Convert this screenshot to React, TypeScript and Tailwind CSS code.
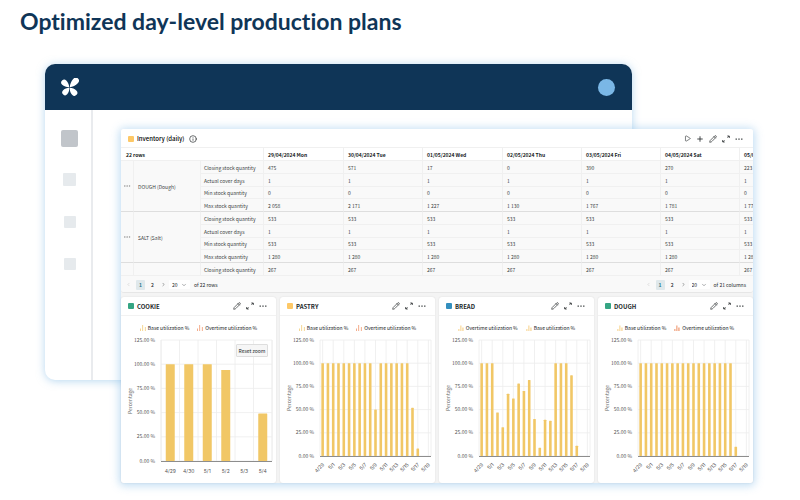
import React from "react";
import { Play, Plus, Pencil, Ellipsis, Info, ChevronLeft, ChevronRight, ChevronDown } from "lucide-react";

const DATES = ["29/04/2024 Mon", "30/04/2024 Tue", "01/05/2024 Wed", "02/05/2024 Thu", "03/05/2024 Fri", "04/05/2024 Sat", "05/05/2024 Sun"];

const METRICS = ["Closing stock quantity", "Actual cover days", "Min stock quantity", "Max stock quantity"];

const same = (value: string) => DATES.map(() => value);

const GROUPS = [
  {
    name: "DOUGH (Dough)",
    rows: [
      ["475", "571", "17", "0", "390", "270", "223"],
      same("1"),
      same("0"),
      ["2 058", "2 171", "1 227", "1 130", "1 767", "1 781", "1 778"],
    ],
  },
  { name: "SALT (Salt)", rows: [same("533"), same("1"), same("533"), same("1 280")] },
  { name: "", rows: [same("267")] },
];

type Series = { label: string; color: string; faded?: boolean };

type ChartData = {
  title: string;
  swatch: string;
  legend: Series[];
  values: number[];
  labels: string[];
  daily?: boolean;
};

const DAYS = ["4/29", "4/30", ...Array.from({ length: 19 }, (_, i) => `5/${i + 1}`)];
const full = (n: number) => Array.from({ length: n }, () => 100);
const BASE = { label: "Base utilization %", color: "#f0c566" };
const OVERTIME = { label: "Overtime utilization %", color: "#ee8a5c" };

const CHARTS: ChartData[] = [
  {
    title: "COOKIE",
    swatch: "bg-[#35a583]",
    legend: [BASE, OVERTIME],
    values: [100, 100, 100, 94, 0, 49],
    labels: ["4/29", "4/30", "5/1", "5/2", "5/3", "5/4"],
    daily: true,
  },
  {
    title: "PASTRY",
    swatch: "bg-[#fdc867]",
    legend: [BASE, OVERTIME],
    values: [...full(10), 50, ...full(6), 52, 8, 0, 0],
    labels: DAYS,
  },
  {
    title: "BREAD",
    swatch: "bg-[#338fbe]",
    legend: [{ ...OVERTIME, color: "#f8cf83", faded: true }, { ...BASE, color: "#f8cf83", faded: true }],
    values: [100, 100, 100, 47, 31, 67, 62, 78, 70, 82, 40, 9, 39, 38, 100, 100, 100, 87, 11, 0, 0],
    labels: DAYS,
  },
  {
    title: "DOUGH",
    swatch: "bg-[#35a583]",
    legend: [{ ...BASE, color: "#f8cf83", faded: true }, { ...OVERTIME, faded: true }],
    values: [...full(18), 10, 0, 0],
    labels: DAYS,
  },
];

function Logo() {
  const petal = "M0-.4C-1.700-2-3-4.800-3-7.200A3 3 0 0 1 3-7.200C3-4.800 1.700-2 0-.4Z";
  return (
    <svg viewBox="0 0 18 18" className="h-[18px] w-[18px]" fill="#fff" aria-hidden="true">
      <g transform="translate(8.500 9.500)">
        <path d={petal} transform="rotate(-47)" />
        <path d={petal} transform="rotate(43) scale(1.050 1.220)" />
        <path d={petal} transform="rotate(138)" />
        <path d={petal} transform="rotate(222) scale(0.950 0.920)" />
      </g>
    </svg>
  );
}

function IconButton({ label, children }: { label: string; children: React.ReactNode }) {
  return (
    <button type="button" aria-label={label} className="flex h-2 w-2 items-center justify-center">
      {children}
    </button>
  );
}

function CommonActions() {
  return (
    <>
      <IconButton label="Edit"><Pencil size={8} strokeWidth={2} /></IconButton>
      <IconButton label="Expand">
        <svg viewBox="0 0 8 8" className="h-2 w-2" fill="none" stroke="currentColor" strokeWidth="0.8">
          <path d="M5.300 1h2v2M7.200 1 5.500 2.700M2.700 7H.7V5M.8 7l1.700-1.700" />
        </svg>
      </IconButton>
      <IconButton label="More">
        <svg viewBox="0 0 8 8" className="h-2 w-2" fill="currentColor">
          <path d="M.6 3.500h1.200v1.200H.6zM3.400 3.500h1.200v1.200H3.400zM6.200 3.500h1.200v1.200H6.200z" />
        </svg>
      </IconButton>
    </>
  );
}

function Pager({ unit, total, name }: { unit: string; total: number; name: string }) {
  return (
    <nav aria-label={`${name} pages`} className="flex items-center">
      <button type="button" aria-label={`Previous ${name}`} className="flex w-[11px] justify-center text-[#bbb]">
        <ChevronLeft size={5} />
      </button>
      <button type="button" aria-current="page" className="mx-[2px] h-[10px] w-[9px] rounded-[1px] bg-[#dfe8eb] text-center font-bold text-[#27778a]">1</button>
      <button type="button" className="w-[11px] text-center font-medium">2</button>
      <button type="button" aria-label={`Next ${name}`} className="flex w-[11px] justify-center">
        <ChevronRight size={5} />
      </button>
      <span className="relative flex items-center">
        <select aria-label={`${name} per page`} defaultValue="20" className="h-[9px] w-[21px] appearance-none rounded-[1px] bg-white pl-[3px] leading-[9px]">
          <option value="20">20</option>
        </select>
        <ChevronDown size={6} strokeWidth={1.500} className="pointer-events-none absolute right-[3px]" />
      </span>
      <span className="ml-1">of {total} {unit}</span>
    </nav>
  );
}

function InventoryTable() {
  return (
    <table className="w-full table-fixed border-separate border-spacing-0 text-left text-[5px] leading-[11px] text-[#3a3f42]">
      <colgroup>
        <col className="w-[12px]" />
        <col className="w-[67px]" />
        <col className="w-[63px]" />
        <col className="w-[80px]" />
        <col className="w-[79px]" />
        <col className="w-[80px]" />
        <col className="w-[79px]" />
        <col className="w-[79px]" />
        <col className="w-[79px]" />
        <col />
      </colgroup>
      <thead className="bg-white">
        <tr className="h-[13px] text-[#15191b]">
          <th colSpan={3} scope="col" className="border-b border-[#f0f0f0] pl-[5px] font-bold">22 rows</th>
          {DATES.map((d) => (
            <th key={d} scope="col" className="overflow-hidden border-b border-l border-[#f0f0f0] pl-1 font-bold whitespace-nowrap">{d}</th>
          ))}
        </tr>
      </thead>
      <tbody>
        {GROUPS.map((g, gi) =>
          g.rows.map((row, ri) => {
            const line = ri === 3 ? "border-b-[#dedede]" : "border-b-[#f0f0f0]";
            const groupLine = g.rows.length === 4 ? "border-b-[#dedede]" : "border-b-[#f0f0f0]";
            return (
              <tr key={`${gi}-${ri}`} className={ri === 2 ? "h-[12px]" : "h-[13px]"}>
                {ri === 0 && (
                  <>
                    <td rowSpan={g.rows.length} className={`border-b p-0 align-middle ${groupLine}`}>
                      {g.name && (
                        <button type="button" aria-label={`${g.name} actions`} className="flex w-full justify-center text-[#999]">
                          <Ellipsis size={8} />
                        </button>
                      )}
                    </td>
                    <th scope="rowgroup" rowSpan={g.rows.length} className={`border-b border-l border-l-[#f0f0f0] p-0 pl-1 align-middle font-normal ${groupLine}`}>{g.name}</th>
                  </>
                )}
                <th scope="row" className={`border-b border-l border-l-[#f0f0f0] p-0 pl-[3px] font-normal whitespace-nowrap ${line}`}>{METRICS[ri]}</th>
                {row.map((v, ci) => (
                  <td key={ci} className={`overflow-hidden border-b border-l border-l-[#f0f0f0] p-0 pl-1 whitespace-nowrap ${line}`}>{v}</td>
                ))}
              </tr>
            );
          })
        )}
      </tbody>
    </table>
  );
}

function LegendItem({ label, color, faded }: Series) {
  return (
    <span className="flex items-center gap-[2px] whitespace-nowrap">
      <svg viewBox="0 0 6 6" className="h-[6px] w-[6px]" fill={color} opacity={faded ? 0.6 : 1} aria-hidden="true">
        {faded ? (
          <path d="M0 4h1.600v2H0zM2 .5h1.600V6H2zM4 2.500h1.800V6H4z" />
        ) : (
          <path d="M.2 3.500h.7V6H.2zM2.400 0h.7v6h-.7zM4.900 2h.7v4h-.7z" />
        )}
      </svg>
      {label}
    </span>
  );
}

function BarChart({ values, labels, daily, title }: ChartData) {
  const left = 40;
  const right = 151;
  const top = 4;
  const bottom = daily ? 125 : 120;
  const step = (right - left) / values.length;
  const y = (v: number) => bottom - (v / 125) * (bottom - top);
  const barWidth = daily ? 9 : 2.600;
  const ticks = [0, 25, 50, 75, 100, 125];
  return (
    <svg viewBox="0 0 155 147" className="block w-full" role="img" aria-label={`${title} utilization by day`}>
      <g stroke="#ececec" strokeWidth="0.8">
        {ticks.map((t) => <line key={t} x1={left} x2={right} y1={y(t)} y2={y(t)} />)}
        {daily
          ? Array.from({ length: 7 }, (_, i) => <line key={i} x1={left + i * step} x2={left + i * step} y1={top} y2={bottom} />)
          : labels.map((l, i) => i % 2 === 0 && <line key={l} x1={left + (i + 0.5) * step} x2={left + (i + 0.5) * step} y1={top} y2={bottom} />)}
        <line x1={left} x2={left} y1={top} y2={bottom} />
        <line x1={right} x2={right} y1={top} y2={bottom} />
      </g>
      <g fill="#f1c766">
        {values.map((v, i) => (
          <rect key={i} x={left + (i + 0.5) * step - barWidth / 2} y={y(v)} width={barWidth} height={bottom - y(v)} rx="0.4" />
        ))}
      </g>
      <line x1={left} x2={right} y1={bottom + 0.500} y2={bottom + 0.500} stroke="#8d8d8d" strokeWidth="1" />
      <g fontSize="5" fill="#555" textAnchor="end">
        {ticks.map((t) => <text key={t} x="34" y={y(t) + 1.500}>{t.toFixed(2)} %</text>)}
      </g>
      <text transform={`translate(11 ${daily ? 65 : 62}) rotate(-90)`} textAnchor="middle" fontSize="5" fill="#666">Percentage</text>
      <g className="font-[Inter,sans-serif]" fontSize="5" fill="#555">
        {labels.map((l, i) => {
          const x = left + (i + 0.5) * step;
          if (daily) return <text key={l} x={x} y="137" textAnchor="middle">{l}</text>;
          if (i % 2) return null;
          return <text key={l} transform={`translate(${x + 2} 129) rotate(-45)`} textAnchor="end">{l}</text>;
        })}
      </g>
    </svg>
  );
}

function ChartCard(chart: ChartData) {
  return (
    <section className="min-w-0 rounded-[3px] bg-white shadow-[0_0_2px_rgba(0,0,0,0.1)]">
      <header className="flex h-[19px] items-center border-b border-[#f2f2f2] pr-[9px] pl-[7px]">
        <span className={`h-[6px] w-[6px] rounded-[1px] ${chart.swatch}`} />
        <h2 className="ml-[3px] flex-1 text-[6px] font-bold">{chart.title}</h2>
        <div className="flex gap-[5px]"><CommonActions /></div>
      </header>
      <div className="mt-2 flex h-2 items-center justify-center gap-2 text-[5px] text-[#15191b]">
        {chart.legend.map((s) => <LegendItem key={s.label} {...s} />)}
      </div>
      <div className="relative mt-1">
        <BarChart {...chart} />
        {chart.daily && (
          <button type="button" className="absolute top-2 right-2 h-[13px] w-8 rounded-[1px] border border-[#dedede] bg-[#f6f6f6] text-[5px] leading-[11px]">
            Reset zoom
          </button>
        )}
      </div>
    </section>
  );
}

export default function App() {
  return (
    <main className="min-h-screen bg-white pb-4 font-['Noto_Sans_CJK_SC',sans-serif] text-[#24292b]">
      <h1 className="px-5 pt-[7px] font-[Lato,sans-serif] text-[23px] leading-7 font-bold text-[#0f3557] [font-variant-ligatures:none]">
        Optimized day-level production plans
      </h1>
      <div className="mt-[29px] mr-[47px] ml-[45px] grid">
        <div className="col-start-1 row-start-1 mr-[121px] mb-[103px] flex flex-col overflow-hidden rounded-[10px] bg-white shadow-[0_1px_9px_rgba(110,175,225,0.5)]">
          <header className="flex h-[46px] items-center justify-between bg-[#0f3557] pr-[17px] pl-4">
            <Logo />
            <span className="h-[17px] w-[17px] rounded-full bg-[#7ab7e6]" />
          </header>
          <div className="flex w-12 flex-1 flex-col items-center border-r-2 border-[#e9ebee] pt-5 pl-[3px]">
            <span className="h-[17px] w-[17px] rounded-[2px] bg-[#c1c5ca]" />
            <span className="mt-[26px] h-[13px] w-[13px] rounded-[1px] bg-[#e6eaed]" />
            <span className="mt-[30px] h-3 w-3 rounded-[1px] bg-[#e6eaed]" />
            <span className="mt-[30px] h-3 w-3 rounded-[1px] bg-[#e6eaed]" />
          </div>
        </div>
        <div className="z-10 col-start-1 row-start-1 mt-[65px] ml-[76px] min-w-0 self-start rounded-[3px] bg-[#f4f4f4] shadow-[0_1px_8px_2px_rgba(125,185,230,0.45)]">
          <section className="overflow-hidden rounded-[3px] border-b border-[#e6e6e6] bg-[#f9f9f9]">
            <header className="flex h-[19px] items-center border-b border-[#f0f0f0] bg-white pt-px pr-[10px] pl-[7px]">
              <span className="h-[6px] w-[6px] rounded-[1px] bg-[#fdc867]" />
              <h2 className="ml-[3px] text-[6px] font-medium text-black">Inventory (daily)</h2>
              <Info size={8} strokeWidth={2} className="ml-[5px]" />
              <div className="ml-auto flex gap-[5px]">
                <IconButton label="Run"><Play size={7} /></IconButton>
                <IconButton label="Add"><Plus size={8} strokeWidth={2.500} /></IconButton>
                <CommonActions />
              </div>
            </header>
            <InventoryTable />
            <footer className="flex h-4 items-center justify-between pt-px pr-[7px] pl-[2px] text-[5px]">
              <Pager name="Rows" unit="rows" total={22} />
              <Pager name="Columns" unit="columns" total={21} />
            </footer>
          </section>
          <div className="mt-1 grid grid-cols-4 gap-1">
            {CHARTS.map((c) => <ChartCard key={c.title} {...c} />)}
          </div>
        </div>
      </div>
    </main>
  );
}
